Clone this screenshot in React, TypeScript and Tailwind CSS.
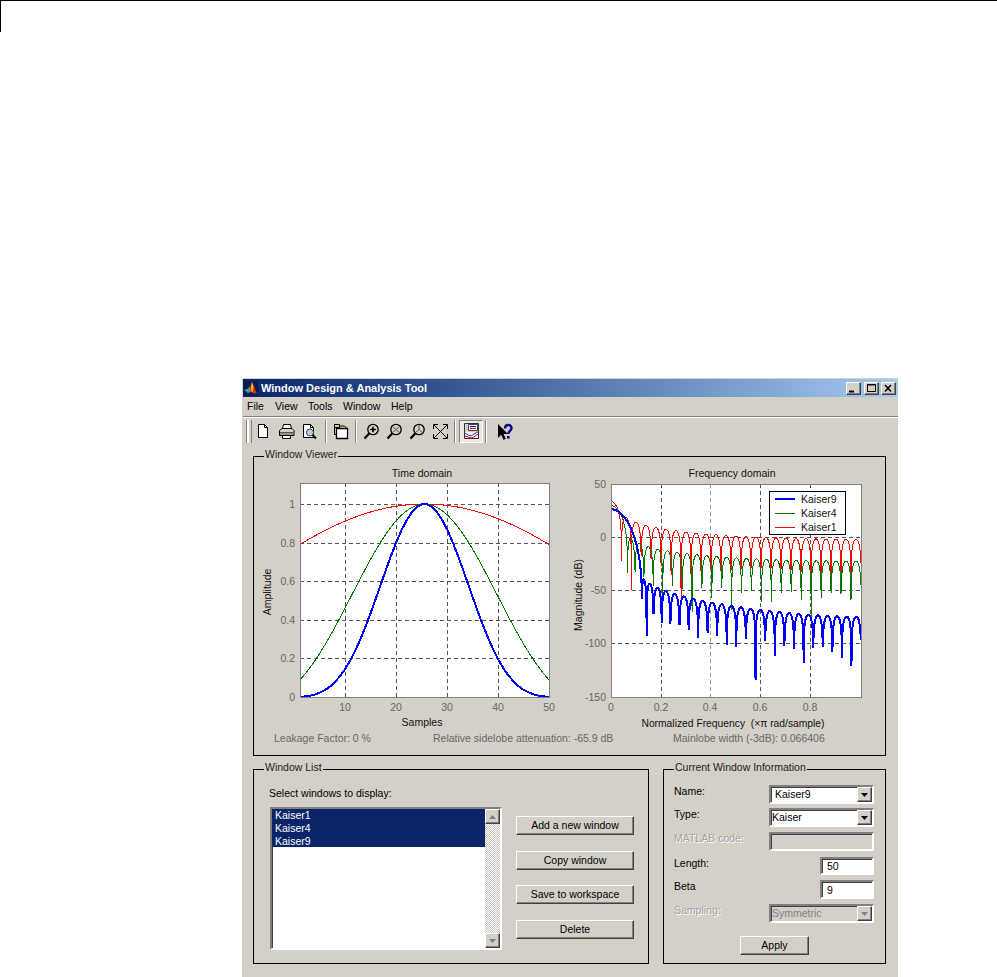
import React from "react";

function i0(x: number) {
  let s = 1, t = 1;
  for (let k = 1; k < 40; k++) {
    t *= (x / (2 * k)) * (x / (2 * k));
    s += t;
  }
  return s;
}
function kaiser(beta: number, N = 50) {
  const w: number[] = [];
  for (let n = 0; n < N; n++) {
    const r = (2 * n) / (N - 1) - 1;
    w.push(i0(beta * Math.sqrt(Math.max(0, 1 - r * r))) / i0(beta));
  }
  return w;
}
const series = [
  { beta: 1, color: "#ff0000", width: 1 },
  { beta: 4, color: "#007a00", width: 1 },
  { beta: 9, color: "#0000ff", width: 2 },
];
function timePts(beta: number) {
  return kaiser(beta)
    .map((v, n) => `${(300 + (n / 49) * 249).toFixed(2)},${(697 - v * 193).toFixed(2)}`)
    .join(" ");
}
function freqPts(beta: number) {
  const w = kaiser(beta);
  const out: string[] = [];
  for (let k = 0; k < 1024; k++) {
    const om = (Math.PI * k) / 1024;
    let re = 0, im = 0;
    w.forEach((v, n) => {
      re += v * Math.cos(om * n);
      im -= v * Math.sin(om * n);
    });
    const db = 10 * Math.log10(re * re + im * im + 1e-20);
    out.push(`${(611 + (k / 1024) * 250).toFixed(2)},${(537 - db * 1.065).toFixed(2)}`);
  }
  return out.join(" ");
}

const tick = "#666666";
const lab = { fontFamily: "'Liberation Sans',sans-serif", fontSize: 10.5, fill: "#111" };

function Grid({ xs, ys, x0, x1, y0, y1 }: { xs: number[]; ys: number[]; x0: number; x1: number; y0: number; y1: number }) {
  return (
    <g stroke="#555" strokeWidth={1} strokeDasharray="4 3" shapeRendering="crispEdges">
      {xs.map((x) => <line key={x} x1={x} x2={x} y1={y0} y2={y1} stroke={x === 710 ? "#999" : "#555"} />)}
      {ys.map((y) => <line key={y} x1={x0} x2={x1} y1={y} y2={y} />)}
    </g>
  );
}

function TimePlot() {
  const xt: [number, string][] = [[345, "10"], [396, "20"], [447, "30"], [498, "40"], [549, "50"]];
  const yt: [number, string][] = [[504, "1"], [543, "0.8"], [581, "0.6"], [620, "0.4"], [658, "0.2"], [697, "0"]];
  return (
    <svg width={312} height={272} viewBox="258 457 312 272" style={lab}>
      <rect x={300} y={483} width={249} height={214} fill="#fff" />
      <Grid xs={xt.map((t) => t[0])} ys={yt.slice(0, 5).map((t) => t[0])} x0={300} x1={549} y0={483} y1={697} />
      {series.map((s) => (
        <polyline key={s.beta} points={timePts(s.beta)} fill="none" stroke={s.color} strokeWidth={s.width} shapeRendering="crispEdges" />
      ))}
      <rect x={300} y={483} width={249} height={214} fill="none" stroke="#808080" strokeWidth={1} shapeRendering="crispEdges" />
      <text x={422} y={477} textAnchor="middle">Time domain</text>
      {xt.map(([x, t]) => <text key={t} x={x} y={711} textAnchor="middle" fill={tick}>{t}</text>)}
      {yt.map(([y, t]) => <text key={t} x={295} y={y + 4} textAnchor="end" fill={tick}>{t}</text>)}
      <text x={422} y={726} textAnchor="middle">Samples</text>
      <text transform="translate(271 592) rotate(-90)" textAnchor="middle">Amplitude</text>
    </svg>
  );
}

function FreqPlot() {
  const xt: [number, string][] = [[611, "0"], [661, "0.2"], [710, "0.4"], [760, "0.6"], [810, "0.8"]];
  const yt: [number, string][] = [[484, "50"], [537, "0"], [590, "-50"], [643, "-100"], [697, "-150"]];
  return (
    <svg width={310} height={272} viewBox="570 457 310 272" style={lab}>
      <defs>
        <clipPath id="fclip"><rect x={611} y={484} width={250} height={213} /></clipPath>
      </defs>
      <rect x={611} y={484} width={250} height={213} fill="#fff" />
      <Grid xs={[661, 710, 760, 810]} ys={[537, 590, 643]} x0={611} x1={861} y0={484} y1={697} />
      <g clipPath="url(#fclip)">
        {series.map((s) => (
          <polyline key={s.beta} points={freqPts(s.beta)} fill="none" stroke={s.color} strokeWidth={s.width} shapeRendering="crispEdges" />
        ))}
      </g>
      <rect x={611} y={484} width={250} height={213} fill="none" stroke="#808080" strokeWidth={1} shapeRendering="crispEdges" />
      <rect x={769.5} y={491.5} width={76} height={43} fill="#fff" stroke="#000" shapeRendering="crispEdges" />
      <line x1={775} x2={795} y1={499} y2={499} stroke="#0000ff" strokeWidth={2} shapeRendering="crispEdges" />
      <line x1={775} x2={795} y1={513.5} y2={513.5} stroke="#007a00" shapeRendering="crispEdges" />
      <line x1={775} x2={795} y1={527.5} y2={527.5} stroke="#ff0000" shapeRendering="crispEdges" />
      <text x={801} y={503}>Kaiser9</text>
      <text x={801} y={517}>Kaiser4</text>
      <text x={801} y={531}>Kaiser1</text>
      <text x={732} y={477} textAnchor="middle">Frequency domain</text>
      {xt.map(([x, t]) => <text key={t} x={x} y={711} textAnchor="middle" fill={tick}>{t}</text>)}
      {yt.map(([y, t]) => <text key={t} x={606} y={y + 4} textAnchor="end" fill={tick}>{t}</text>)}
      <text x={733} y={727} textAnchor="middle" fontSize={10.3} style={{ whiteSpace: "pre" }}>{"Normalized Frequency  (×π rad/sample)"}</text>
      <text transform="translate(582 595) rotate(-90)" textAnchor="middle">Magnitude (dB)</text>
    </svg>
  );
}

const raised = "border border-t-white border-l-white border-b-[#404040] border-r-[#404040] shadow-[inset_-1px_-1px_0_#808080] bg-[#d4d0c8]";
const sunken = "border-2 border-t-[#808080] border-l-[#808080] border-b-white border-r-white shadow-[inset_1px_1px_0_#404040]";
const disabledText = "text-[#a0a0a0] [text-shadow:1px_1px_0_#fff]";

function Panel({ title, className, children }: { title: string; className: string; children: React.ReactNode }) {
  return (
    <div className={`relative border border-black ${className}`}>
      <span className="absolute left-[10px] top-[-9px] bg-[#d4d0c8] px-px text-[#222] leading-[13px]">{title}</span>
      {children}
    </div>
  );
}

function Arrow({ disabled }: { disabled?: boolean }) {
  return (
    <svg width={7} height={4} viewBox="0 0 7 4">
      <path d="M0 0h7L3.5 4z" fill={disabled ? "#808080" : "#000"} />
    </svg>
  );
}

function Combo({ text, disabled, indent }: { text: string; disabled?: boolean; indent?: boolean }) {
  return (
    <div className={`${sunken} flex h-[19px] w-[105px] items-stretch ${disabled ? "bg-[#d4d0c8]" : "bg-white"}`}>
      <span className={`flex-1 leading-[15px] ${indent ? "pl-[4px]" : "pl-[1px]"} ${disabled ? "text-[#808080]" : ""}`}>{text}</span>
      <span className={`${raised} flex w-[15px] items-center justify-center`}><Arrow disabled={disabled} /></span>
    </div>
  );
}

function Row({ label, className, disabled, children }: { label: string; className: string; disabled?: boolean; children: React.ReactNode }) {
  return (
    <div className={`flex items-start justify-between ${className}`}>
      <span className={`leading-[13px] ${disabled ? disabledText : ""}`}>{label}</span>
      {children}
    </div>
  );
}

function Ico({ children }: { children: React.ReactNode }) {
  return (
    <span className="flex h-[23px] w-[23px] items-center justify-center">
      <svg width={17} height={17} viewBox="0 0 17 17" fill="none" stroke="#000" strokeWidth={1}>{children}</svg>
    </span>
  );
}
function Sep({ className }: { className: string }) {
  return <span className={`h-[23px] w-[2px] border-l border-l-[#808080] border-r border-r-white ${className}`} />;
}
function Lens({ children }: { children?: React.ReactNode }) {
  return (
    <>
      <circle cx={10} cy={6.5} r={5.2} fill="#d4d0c8" strokeWidth={1.3} />
      <path d="M6.2 10.5 1.5 15.5" strokeWidth={2.2} />
      {children}
    </>
  );
}

function Toolbar() {
  return (
    <div className="flex h-[29px] items-start pl-[3px] pt-[2px]">
      <span className="h-[23px] w-[6px] border-x border-x-[#808080] bg-white shadow-[inset_-2px_0_0_#d4d0c8,inset_1px_0_0_#fff]" />
      <Ico>
        <path d="M3.5 1.5h6l3 3v10h-9z" fill="#fff" /><path d="M9.5 1.5v3h3" />
      </Ico>
      <Ico>
        <path d="M5.5 1.5h7l1 4h-9z" fill="#fff" />
        <path d="M1.5 7.5 4 5.5h10l2 2v5H1.5z" fill="#d4d0c8" />
        <path d="M2 9.5h13M2 11h13" stroke="#555" />
        <path d="M4.5 12.5h8v3h-8z" fill="#fff" />
      </Ico>
      <Ico>
        <path d="M2.5 1.5h7l3 3v10h-10z" fill="#fff" /><path d="M9.5 1.5v3h3" />
        <circle cx={9} cy={9.5} r={3.5} fill="#b8d0e0" stroke="#444" />
        <path d="M11.5 12 15 15.5" strokeWidth={2} />
      </Ico>
      <Sep className="ml-[4px] mr-[2px]" />
      <Ico>
        <path d="M2.5 1.5h5v3h-5z" fill="#d4d0c8" />
        <path d="M2.5 1.5v10h2" />
        <path d="M7.5 3h5l2 2" />
        <path d="M4.5 5.5h11v10h-11z" fill="#fff" strokeWidth={1.3} />
      </Ico>
      <Sep className="ml-[3px] mr-[3px]" />
      <Ico>
        <Lens><path d="M7.2 6.5h5.6M10 3.7v5.6" strokeWidth={1.6} /></Lens>
      </Ico>
      <Ico>
        <Lens><path d="M6.5 3.5l7 6M13.5 3.5l-7 6" stroke="#555" /></Lens>
      </Ico>
      <Ico>
        <Lens><path d="M10 6.5V1.5M10 6.5 6 10M10 6.5 14 10" stroke="#555" /></Lens>
      </Ico>
      <Ico>
        <path d="M2 2l13 13M15 2 2 15" />
        <path d="M1.5 6V1.5H6M11 1.5h4.5V6M1.5 11v4.5H6M11 15.5h4.5V11" />
      </Ico>
      <Sep className="ml-[2px] mr-[3px]" />
      <span className="flex h-[23px] w-[24px] items-center justify-center border border-t-[#808080] border-l-[#808080] border-b-white border-r-white bg-[#ece9e3]">
        <svg width={17} height={17} viewBox="0 0 17 17" fill="none" stroke="#000">
          <path d="M1.5 .5h14v15h-14z" fill="#d4d0c8" stroke="#333" />
          <path d="M2 9h13v6H2z" fill="#fff" stroke="none" />
          <path d="M5.5 1.5h9v6h-9z" fill="#fff" stroke="#444" />
          <path d="M7 3.5h6" stroke="#0000ff" />
          <path d="M7 5.5h6" stroke="#ff0000" />
          <path d="M2 10l3 2 3 1 3-2 4-2" stroke="#2030d0" />
          <path d="M2 13l3 1 3 1 3-1 4-3" stroke="#ff0000" />
        </svg>
      </span>
      <Sep className="ml-[2px] mr-[5px]" />
      <span className="flex h-[23px] w-[23px] items-center justify-center">
        <svg width={18} height={18} viewBox="0 0 18 18">
          <path d="M3 1v14l3.2-3.2L8.5 17l2.3-1.2-2.2-4.8H13z" fill="#000" />
          <path d="M10 5.5C10 1 16.5 1 16.5 5c0 3-3.2 3-3.2 6" fill="none" stroke="#0a0a8c" strokeWidth={2.4} />
          <rect x={12} y={13} width={2.6} height={2.6} fill="#0a0a8c" />
        </svg>
      </span>
    </div>
  );
}

function Logo() {
  return (
    <svg width={14} height={15} viewBox="0 0 14 15" className="ml-[1px] mr-[3px] shrink-0">
      <rect width={14} height={15} fill="#0a1a50" />
      <path d="M0 9 4 7.5 6 5 7 11 4 12z" fill="#3f9a9a" />
      <path d="M8 1 10 5l3 8-4-1-3-1 .5-5z" fill="#d2320c" />
      <path d="M8 1 9.5 6 9 11 6.5 10l.5-5z" fill="#f4a010" />
      <path d="M8 2 8.5 6 7.5 8z" fill="#ffe860" />
    </svg>
  );
}

function TitleBtn({ children }: { children: React.ReactNode }) {
  return (
    <span className={`${raised} flex h-[13px] w-[15px] items-center justify-center`}>
      <svg width={11} height={9} viewBox="0 0 11 9" fill="none" stroke="#000">{children}</svg>
    </span>
  );
}

export default function App() {
  return (
    <div className="h-[977px] w-[997px] overflow-hidden bg-white text-[10.5px] text-black [font-family:'Liberation_Sans',sans-serif]">
      <div className="h-px bg-black" />
      <div className="h-[31px] w-px bg-black" />
      <div className="ml-[242px] mt-[346px] h-[599px] w-[656px] bg-[#d4d0c8] pl-px pt-px">
        <div className="flex h-[18px] items-center bg-linear-to-r from-[#0a246a] to-[#a6caf0] pr-[2px]">
          <Logo />
          <span className="flex-1 text-[11px] font-bold text-white">Window Design &amp; Analysis Tool</span>
          <TitleBtn><path d="M1 7.5h5" strokeWidth={2} /></TitleBtn>
          <span className="w-px" />
          <span className="mr-[2px]" />
          <TitleBtn><path d="M1.5 .5h8v7h-8z" /><path d="M1 1h9" /></TitleBtn>
          <span className="w-[2px]" />
          <TitleBtn><path d="M2 1l6 6.5M8 1 2 7.5" strokeWidth={1.5} /></TitleBtn>
        </div>
        <div className="flex h-[19px] items-center pl-[4px]">
          <span className="w-[28px]">File</span>
          <span className="w-[33px]">View</span>
          <span className="w-[35px]">Tools</span>
          <span className="w-[48px]">Window</span>
          <span>Help</span>
        </div>
        <div className="h-px bg-[#808080]" />
        <div className="h-px bg-white" />
        <Toolbar />
        <div className="ml-[10px] mt-[9px] flex flex-col gap-[13px]">
          <Panel title="Window Viewer" className="h-[300px] w-[633px]">
            <div className="flex pl-[4px] pt-0"><TimePlot /><FreqPlot /></div>
            <div className="mt-[3px] flex pl-[20px] leading-[13px] text-[#666]">
              <span className="w-[159px]">Leakage Factor: 0 %</span>
              <span className="w-[240px]">Relative sidelobe attenuation: -65.9 dB</span>
              <span>Mainlobe width (-3dB): 0.066406</span>
            </div>
          </Panel>
          <div className="flex gap-[14px]">
            <Panel title="Window List" className="h-[195px] w-[396px]">
              <div className="pl-[15px] pt-[17px] leading-[13px]">Select windows to display:</div>
              <div className="ml-[16px] mt-[7px] flex">
                <div className={`${sunken} flex h-[143px] w-[232px] bg-white`}>
                  <div className="flex-1">
                    <div className="bg-[#0a246a] pl-[3px] text-white">
                      <div className="h-[13px] leading-[13px]">Kaiser1</div>
                      <div className="h-[13px] leading-[13px]">Kaiser4</div>
                      <div className="h-[12px] leading-[13px]">Kaiser9</div>
                    </div>
                  </div>
                  <div className="flex w-[15px] flex-col bg-[repeating-conic-gradient(#c8c5be_0_25%,#fff_0_50%)] bg-[length:2px_2px]">
                    <span className={`${raised} flex h-[15px] items-center justify-center`}>
                      <svg width={7} height={4} viewBox="0 0 7 4"><path d="M3.5 0 7 4H0z" fill="#808080" /></svg>
                    </span>
                    <span className="flex-1" />
                    <span className={`${raised} flex h-[15px] items-center justify-center`}><Arrow disabled /></span>
                  </div>
                </div>
                <div className="ml-[14px] flex w-[118px] flex-col gap-[15.67px] pt-[9px] text-center leading-[17px]">
                  <div className={`${raised} h-[19px]`}>Add a new window</div>
                  <div className={`${raised} h-[19px]`}>Copy window</div>
                  <div className={`${raised} h-[19px]`}>Save to workspace</div>
                  <div className={`${raised} h-[19px]`}>Delete</div>
                </div>
              </div>
            </Panel>
            <Panel title="Current Window Information" className="h-[195px] w-[223px]">
              <div className="pl-[10px] pr-[11px] pt-[15px]">
                <Row label="Name:" className="h-[19px]"><Combo text="Kaiser9" indent /></Row>
                <Row label="Type:" className="mt-[4px] h-[19px]"><Combo text="Kaiser" /></Row>
                <Row label="MATLAB code:" className="mt-[5px] h-[19px]" disabled>
                  <div className={`${sunken} h-[19px] w-[105px]`} />
                </Row>
                <Row label="Length:" className="mt-[6px] h-[18px]">
                  <div className={`${sunken} h-[18px] w-[54px] bg-white pl-[5px] leading-[15px]`}>50</div>
                </Row>
                <Row label="Beta" className="mt-[5px] h-[19px]">
                  <div className={`${sunken} h-[19px] w-[54px] bg-white pl-[5px] leading-[16px]`}>9</div>
                </Row>
                <Row label="Sampling:" className="mt-[5px] h-[19px]" disabled><Combo text="Symmetric" disabled /></Row>
                <div className={`${raised} ml-[66px] mt-[13px] h-[19px] w-[69px] text-center leading-[17px]`}>Apply</div>
              </div>
            </Panel>
          </div>
        </div>
      </div>
    </div>
  );
}
